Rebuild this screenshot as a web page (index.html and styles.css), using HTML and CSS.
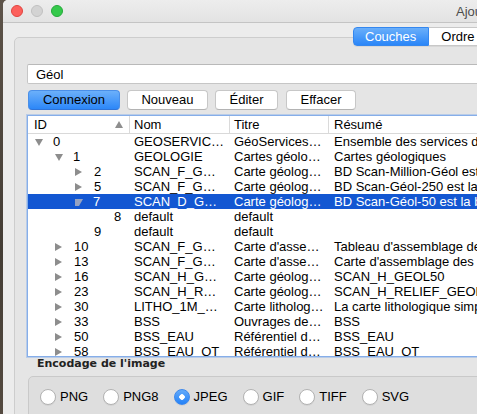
FILE: index.html
```html
<!DOCTYPE html>
<html lang="fr">

<head>
  <meta charset="UTF-8">
  <title>Ajouter une ou plusieurs couches WMS/WMTS</title>
  <link rel="stylesheet" href="styles.css">
</head>

<body>
  <div id="window">
    <div class="titlebar">
      <span class="light close"></span>
      <span class="light minimize"></span>
      <span class="light zoom"></span>
      <span class="title">Ajouter une ou plusieurs couches WMS/WMTS</span>
    </div>

    <div class="tabs">
      <span class="segment active">Couches</span>
      <span class="segment">Ordre des couches</span>
    </div>

    <div class="tab-box">
      <input class="connection" type="text" value="Géol">

      <div class="buttons">
        <button type="button" class="default w-connect">Connexion</button>
        <button type="button" class="w-new">Nouveau</button>
        <button type="button" class="w-edit">Éditer</button>
        <button type="button" class="w-delete">Effacer</button>
      </div>

      <div class="tree">
        <div class="head">
          <div class="cell c-id">ID<span class="sort"></span></div>
          <div class="cell c-name">Nom</div>
          <div class="cell c-title">Titre</div>
          <div class="cell c-summary">Résumé</div>
        </div>

        <div class="row">
          <div class="cell c-id l0"><span class="tw open"></span>0</div>
          <div class="cell c-name">GEOSERVIC…</div>
          <div class="cell c-title">GéoServices…</div>
          <div class="cell c-summary">Ensemble des services du BRGM</div>
        </div>
        <div class="row">
          <div class="cell c-id l1"><span class="tw open"></span>1</div>
          <div class="cell c-name">GEOLOGIE</div>
          <div class="cell c-title">Cartes géolo…</div>
          <div class="cell c-summary">Cartes géologiques</div>
        </div>
        <div class="row">
          <div class="cell c-id l2"><span class="tw"></span>2</div>
          <div class="cell c-name">SCAN_F_G…</div>
          <div class="cell c-title">Carte géolog…</div>
          <div class="cell c-summary">BD Scan-Million-Géol est la base</div>
        </div>
        <div class="row">
          <div class="cell c-id l2"><span class="tw"></span>5</div>
          <div class="cell c-name">SCAN_F_G…</div>
          <div class="cell c-title">Carte géolog…</div>
          <div class="cell c-summary">BD Scan-Géol-250 est la base</div>
        </div>
        <div class="row selected">
          <div class="cell c-id l2"><span class="tw open"></span>7</div>
          <div class="cell c-name">SCAN_D_G…</div>
          <div class="cell c-title">Carte géolog…</div>
          <div class="cell c-summary">BD Scan-Géol-50 est la base</div>
        </div>
        <div class="row">
          <div class="cell c-id l3"><span class="tw leaf"></span>8</div>
          <div class="cell c-name">default</div>
          <div class="cell c-title">default</div>
          <div class="cell c-summary"></div>
        </div>
        <div class="row">
          <div class="cell c-id l2"><span class="tw leaf"></span>9</div>
          <div class="cell c-name">default</div>
          <div class="cell c-title">default</div>
          <div class="cell c-summary"></div>
        </div>
        <div class="row">
          <div class="cell c-id l1"><span class="tw"></span>10</div>
          <div class="cell c-name">SCAN_F_G…</div>
          <div class="cell c-title">Carte d'asse…</div>
          <div class="cell c-summary">Tableau d'assemblage des cartes</div>
        </div>
        <div class="row">
          <div class="cell c-id l1"><span class="tw"></span>13</div>
          <div class="cell c-name">SCAN_F_G…</div>
          <div class="cell c-title">Carte d'asse…</div>
          <div class="cell c-summary">Carte d'assemblage des cartes</div>
        </div>
        <div class="row">
          <div class="cell c-id l1"><span class="tw"></span>16</div>
          <div class="cell c-name">SCAN_H_G…</div>
          <div class="cell c-title">Carte géolog…</div>
          <div class="cell c-summary">SCAN_H_GEOL50</div>
        </div>
        <div class="row">
          <div class="cell c-id l1"><span class="tw"></span>23</div>
          <div class="cell c-name">SCAN_H_R…</div>
          <div class="cell c-title">Carte géolog…</div>
          <div class="cell c-summary">SCAN_H_RELIEF_GEOL50</div>
        </div>
        <div class="row">
          <div class="cell c-id l1"><span class="tw"></span>30</div>
          <div class="cell c-name">LITHO_1M_…</div>
          <div class="cell c-title">Carte litholog…</div>
          <div class="cell c-summary">La carte lithologique simplifiée</div>
        </div>
        <div class="row">
          <div class="cell c-id l1"><span class="tw"></span>33</div>
          <div class="cell c-name">BSS</div>
          <div class="cell c-title">Ouvrages de…</div>
          <div class="cell c-summary">BSS</div>
        </div>
        <div class="row">
          <div class="cell c-id l1"><span class="tw"></span>50</div>
          <div class="cell c-name">BSS_EAU</div>
          <div class="cell c-title">Référentiel d…</div>
          <div class="cell c-summary">BSS_EAU</div>
        </div>
        <div class="row">
          <div class="cell c-id l1"><span class="tw"></span>58</div>
          <div class="cell c-name">BSS_EAU_QT</div>
          <div class="cell c-title">Référentiel d…</div>
          <div class="cell c-summary">BSS_EAU_QT</div>
        </div>
      </div>

      <div class="encoding">
        <div class="legend">Encodage de l'image</div>
        <div class="radios">
          <span class="radio"><span class="dot"></span>PNG</span>
          <span class="radio"><span class="dot"></span>PNG8</span>
          <span class="radio"><span class="dot checked"></span>JPEG</span>
          <span class="radio"><span class="dot"></span>GIF</span>
          <span class="radio"><span class="dot"></span>TIFF</span>
          <span class="radio"><span class="dot"></span>SVG</span>
        </div>
      </div>
    </div>
  </div>
</body>

</html>
```

FILE: styles.css
```css
html,
body {
  margin: 0;
  padding: 0;
}

body {
  display: flex;
  height: 414px;
  overflow: hidden;
  background: linear-gradient(180deg, #5d5349, #443d35 60%, #544a40);
  font-family: "Liberation Sans", Arial, sans-serif;
  font-size: 13px;
  color: #000;
}

#window {
  flex: 1;
  min-width: 0;
  margin-left: 3px;
  overflow: hidden;
  background: #ececec;
  border-top-left-radius: 5px;
}

/* title bar */

.titlebar {
  display: flex;
  align-items: center;
  gap: 8px;
  height: 22px;
  padding-left: 8px;
  border-bottom: 1px solid #c4c4c4;
  background: linear-gradient(#ededed, #e3e3e3);
  white-space: nowrap;

  >* {
    flex-shrink: 0;
  }
}

.light {
  box-sizing: border-box;
  width: 12px;
  height: 12px;
  border-radius: 50%;
}

.close {
  background: #fc605c;
  border: 1px solid #e0443f;
}

.minimize {
  background: #d3d3d3;
  border: 1px solid #c0c0c0;
}

.zoom {
  background: #35c94b;
  border: 1px solid #25a93a;
}

.title {
  margin-left: 385px;
  color: #4c4c4c;
}

/* segmented control */

.tabs {
  position: relative;
  z-index: 1;
  display: flex;
  margin: 4px 0 -9px 350px;
  white-space: nowrap;
}

.segment {
  flex-shrink: 0;
  height: 19px;
  box-sizing: border-box;
  line-height: 17px;
  padding: 0 12px;
  background: #fff;
  border: 1px solid #c8c8c8;
  border-left: 0;
  box-shadow: 0 1px 0 rgba(0, 0, 0, 0.06);

  &.active {
    padding: 0 12px 0 11px;
    color: #fff;
    background: linear-gradient(#6aaffa, #2a86f8);
    border: 1px solid #3487ef;
    border-radius: 4px 0 0 4px;
  }
}

/* tab content */

.tab-box {
  width: 700px;
  margin-left: 11px;
  padding: 26px 12px 0 12px;
  height: 400px;
  background: #e5e5e5;
  border: 1px solid #cdcdcd;
  border-radius: 5px;
}

.connection {
  display: block;
  box-sizing: border-box;
  width: 100%;
  height: 20px;
  margin: 0;
  padding: 0 8px;
  font-family: inherit;
  font-size: 13px;
  color: #000;
  background: #fff;
  border: 1px solid #c6c6c6;
  border-top-color: #b9b9b9;
  border-radius: 2px;
  outline: none;
}

.buttons {
  display: flex;
  gap: 7px;
  margin: 6px 0 0 1px;

  button {
    height: 20px;
    padding: 0;
    font-family: inherit;
    font-size: 13px;
    line-height: 18px;
    color: #000;
    background: #fff;
    border: 1px solid #c7c7c7;
    border-bottom-color: #b3b3b3;
    border-radius: 4px;
  }

  .default {
    background: linear-gradient(#6cb0fa, #2c87f8);
    border-color: #4a8fe8;
    border-bottom-color: #2f74d9;
  }
}

.w-connect {
  width: 92px;
}

.w-new {
  width: 81px;
}

.w-edit {
  width: 63px;
}

.w-delete {
  width: 70px;
  margin-left: 1px;
}

/* layer tree */

.tree {
  box-sizing: border-box;
  height: 242px;
  margin-top: 5px;
  overflow: hidden;
  background: #fff;
  border: 1px solid #86aee9;
  box-shadow: 0 0 0 1px rgba(130, 172, 236, 0.45);
}

.head {
  display: flex;
  height: 18px;
  box-sizing: border-box;
  line-height: 17px;
  border-bottom: 1px solid #d9d9d9;

  .c-id {
    padding-left: 6px;
  }

  .c-name,
  .c-title,
  .c-summary {
    border-left-color: #dadada;
  }
}

.sort {
  width: 0;
  height: 0;
  margin: 0 6px 0 auto;
  border-left: 4px solid transparent;
  border-right: 4px solid transparent;
  border-bottom: 7px solid #8e8e8e;
}

.row {
  display: flex;
  box-sizing: border-box;
  height: 15px;
  padding-top: 1px;
  line-height: 14px;

  &.selected {
    color: #fff;
    background: #1357d2;

    .tw {
      border-top-color: #96a3c2;
      border-left-color: #96a3c2;
    }
  }
}

.cell {
  flex-shrink: 0;
  box-sizing: border-box;
  white-space: nowrap;
}

.c-id {
  display: flex;
  align-items: center;
  width: 101px;
}

.c-name {
  width: 100px;
  padding-left: 4px;
  border-left: 1px solid transparent;
}

.c-title {
  width: 99px;
  padding-left: 4px;
  border-left: 1px solid transparent;
}

.c-summary {
  flex: 1;
  padding-left: 5px;
  border-left: 1px solid transparent;
}

.l0 {
  padding-left: 7px;
}

.l1 {
  padding-left: 27px;
}

.l2 {
  padding-left: 47px;
}

.l3 {
  padding-left: 67px;
}

/* disclosure triangles */

.tw {
  flex-shrink: 0;
  width: 0;
  height: 0;
  margin-right: 12px;
  border-top: 4px solid transparent;
  border-bottom: 4px solid transparent;
  border-left: 7px solid #8d8d8d;

  &.open {
    margin-right: 10px;
    border-left: 4.5px solid transparent;
    border-right: 4.5px solid transparent;
    border-top: 7px solid #8d8d8d;
    border-bottom: 0;
  }

  &.leaf {
    width: 19px;
    margin-right: 0;
    border: 0;
  }
}

/* image encoding */

.encoding {
  .legend {
    margin-left: 10px;
    font-family: "DejaVu Sans", sans-serif;
    font-size: 11px;
    font-weight: bold;
    line-height: 14px;
    color: #222;
  }
}

.radios {
  display: flex;
  gap: 15px;
  height: 60px;
  margin: 5px 0 0 1px;
  padding: 12px 0 0 11px;
  background: #dedede;
  border: 1px solid #c9c9c9;
  border-radius: 5px;
}

.radio {
  display: flex;
  align-items: center;
  gap: 4px;
  height: 16px;
  line-height: 16px;
}

.dot {
  box-sizing: border-box;
  width: 16px;
  height: 16px;
  background: #fff;
  border: 1px solid #b1b1b1;
  border-radius: 50%;
  box-shadow: 0 1px 0 rgba(0, 0, 0, 0.05);

  &.checked {
    background: radial-gradient(circle, #fff 0 2.5px, transparent 3px), linear-gradient(#63aafa, #2482f8);
    border-color: #3d88ec;
  }
}
```
